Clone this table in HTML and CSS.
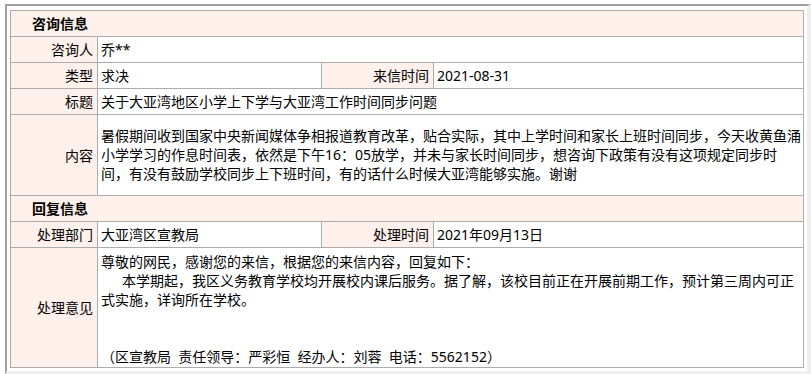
FILE: index.html
```html
<!DOCTYPE html>
<html lang="zh-CN">
<head>
<meta charset="utf-8">
<title>咨询信息</title>
<link rel="stylesheet" href="styles.css">
</head>
<body>
<div class="frame">
  <table class="info">
    <colgroup>
      <col class="c1"><col class="c2"><col class="c3"><col class="c4">
    </colgroup>
    <tr><th class="section" colspan="4">咨询信息</th></tr>
    <tr><td class="label">咨询人</td><td class="value" colspan="3">乔**</td></tr>
    <tr><td class="label">类型</td><td class="value">求决</td><td class="label">来信时间</td><td class="value">2021-08-31</td></tr>
    <tr><td class="label">标题</td><td class="value" colspan="3">关于大亚湾地区小学上下学与大亚湾工作时间同步问题</td></tr>
    <tr class="content-row"><td class="label">内容</td><td class="value tall" colspan="3">暑假期间收到国家中央新闻媒体争相报道教育改革，贴合实际，其中上学时间和家长上班时间同步，今天收黄鱼涌<br>小学学习的作息时间表，依然是下午16：05放学，并未与家长时间同步，想咨询下政策有没有这项规定同步时<br>间，有没有鼓励学校同步上下班时间，有的话什么时候大亚湾能够实施。谢谢</td></tr>
    <tr><th class="section" colspan="4">回复信息</th></tr>
    <tr><td class="label">处理部门</td><td class="value">大亚湾区宣教局</td><td class="label">处理时间</td><td class="value">2021年09月13日</td></tr>
    <tr><td class="label">处理意见</td><td class="value reply" colspan="3">尊敬的网民，感谢您的来信，根据您的来信内容，回复如下：<br><span class="indent"></span>本学期起，我区义务教育学校均开展校内课后服务。据了解，该校目前正在开展前期工作，预计第三周内可正<br>式实施，详询所在学校。<br><br><br>（区宣教局&nbsp; 责任领导：严彩恒&nbsp; 经办人：刘蓉&nbsp; 电话：5562152）</td></tr>
  </table>
</div>
</body>
</html>
```
FILE: styles.css
```css
html, body {
  margin: 0;
  padding: 0;
  background: #ffffff;
}
body {
  font-family: "Noto Sans", "Noto Sans CJK SC", sans-serif;
  font-size: 14px;
  color: #000;
}
.frame {
  margin: 4px 0 0 5px;
  border-top: 2px solid #a0a0a0;
  border-left: 2px solid #a0a0a0;
  border-right: 4px solid #eeeeee;
  border-bottom: 4px solid #f0f0f0;
  padding: 4px 3px 3px 3px;
}
.info {
  width: 794px;
  border-collapse: collapse;
  table-layout: fixed;
  border: 1px solid #acacac;
}
.c1 { width: 87px; }
.c2 { width: 224px; }
.c3 { width: 112px; }
.c4 { width: auto; }
.info th, .info td {
  border: 1px solid #acacac;
  line-height: 19px;
  padding: 3px 3px;
  white-space: nowrap;
  overflow: hidden;
}
.section {
  background: #fef0ea;
  text-align: left;
  font-weight: bold;
  padding-left: 21px !important;
}
.label {
  background: #fef0ea;
  text-align: right;
  padding-right: 4px !important;
}
.value {
  text-align: left;
  background: #fff;
}
.tall {
  padding-top: 11px !important;
  padding-bottom: 12px !important;
}
.reply {
  padding-top: 4px !important;
  padding-bottom: 1px !important;
}
.indent {
  display: inline-block;
  width: 21px;
}
```
